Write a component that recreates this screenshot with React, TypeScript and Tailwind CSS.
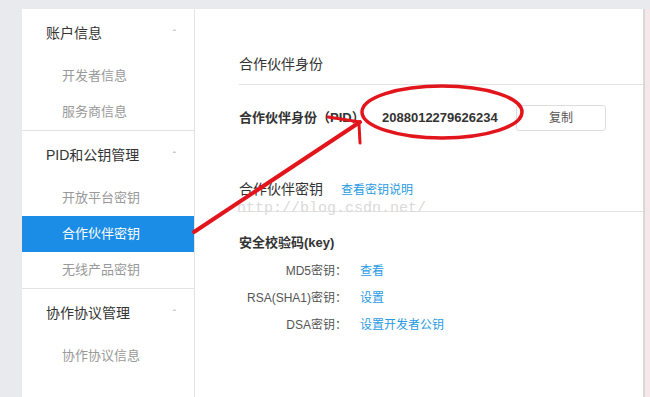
import React from 'react';

// 侧边菜单数据
const menuGroups = [
  { title: '账户信息', items: ['开发者信息', '服务商信息'] },
  { title: 'PID和公钥管理', items: ['开放平台密钥', '合作伙伴密钥', '无线产品密钥'] },
  { title: '协作协议管理', items: ['协作协议信息'] },
];

const keyRows = [
  { label: 'MD5密钥：', link: '查看' },
  { label: 'RSA(SHA1)密钥：', link: '设置' },
  { label: 'DSA密钥：', link: '设置开发者公钥' },
];

const font = { fontFamily: '"Liberation Sans", "Noto Sans CJK SC", sans-serif' };

const Sidebar = () => (
  <div className="w-[173px] bg-white border-r border-[#e3e3e3] shrink-0">
    {menuGroups.map((group, gi) => (
      <div key={group.title} className={gi < menuGroups.length - 1 ? 'border-b border-[#e3e3e3]' : ''}>
        <div className="h-[49px] flex items-center justify-between pl-[24px] pr-[18px] text-[14px] text-[#333]">
          <span>{group.title}</span>
          <span className="text-[10px] text-[#aaa] leading-none mt-[2px]">ˆ</span>
        </div>
        {group.items.map((item) => {
          const active = item === '合作伙伴密钥';
          return (
            <div
              key={item}
              className={`h-[36px] flex items-center pl-[40px] text-[13px] ${
                active ? 'bg-[#1c8de6] text-white' : 'text-[#999]'
              }`}
            >
              {item}
            </div>
          );
        })}
      </div>
    ))}
  </div>
);

const MainPanel = () => (
  <div className="flex-1 bg-white pl-[44px] border-r border-[#d9d9d9]">
    {/* 合作伙伴身份 */}
    <div className="mt-[36px] h-[40px] flex items-center border-b border-[#e3e3e3] text-[14px] text-[#333]">
      合作伙伴身份
    </div>
    <div className="mt-[20px] h-[26px] flex items-center">
      <span className="w-[143px] text-[13px] font-bold text-[#333]">合作伙伴身份（PID）</span>
      <span className="w-[114px] text-[13px] font-bold text-[#333]">2088012279626234</span>
      <button className="ml-[20px] w-[90px] h-[26px] border border-[#ddd] rounded-[3px] text-[12px] text-[#555] bg-white">
        复制
      </button>
    </div>

    {/* 合作伙伴密钥 */}
    <div className="mt-[37px] h-[44px] flex items-center border-b border-[#e3e3e3]">
      <span className="text-[14px] text-[#333]">合作伙伴密钥</span>
      <span className="ml-[18px] text-[12px] text-[#2a9be2]">查看密钥说明</span>
    </div>
    <div className="mt-[21px] h-[20px] flex items-center text-[13px] font-bold text-[#333]">安全校验码(key)</div>
    <div className="mt-[4px]">
      {keyRows.map((row) => (
        <div key={row.label} className="h-[27px] flex items-center text-[12px]">
          <span className="w-[108px] text-right text-[#555]">{row.label}</span>
          <span className="ml-[13px] text-[#2a9be2]">{row.link}</span>
        </div>
      ))}
    </div>
  </div>
);

export default function App() {
  return (
    <div className="relative w-[650px] h-[397px] overflow-hidden bg-[#e8eaee]" style={font}>
      <div className="flex h-full pt-[9px] pl-[22px]">
        <Sidebar />
        <MainPanel />
        <div className="w-[6px] bg-[#f4e8ea] border-l border-[#e0d6d8]" />
      </div>

      {/* 水印 */}
      <div
        className="absolute left-[237px] top-[201px] text-[15px] text-[#dadada] leading-none"
        style={{ fontFamily: '"Liberation Mono", monospace' }}
      >
        http://blog.csdn.net/
      </div>

      {/* 红色标注 */}
      <svg className="absolute inset-0 pointer-events-none" width="650" height="397">
        <ellipse cx="442" cy="112" rx="80" ry="26" fill="none" stroke="#e3151c" strokeWidth="3.5" />
        <line x1="194" y1="232" x2="360" y2="122" stroke="#e3151c" strokeWidth="4" strokeLinecap="round" />
        <line x1="360" y1="122" x2="328" y2="117" stroke="#e3151c" strokeWidth="3" strokeLinecap="round" />
        <line x1="359" y1="124" x2="360" y2="143" stroke="#e3151c" strokeWidth="3" strokeLinecap="round" />
      </svg>
    </div>
  );
}
